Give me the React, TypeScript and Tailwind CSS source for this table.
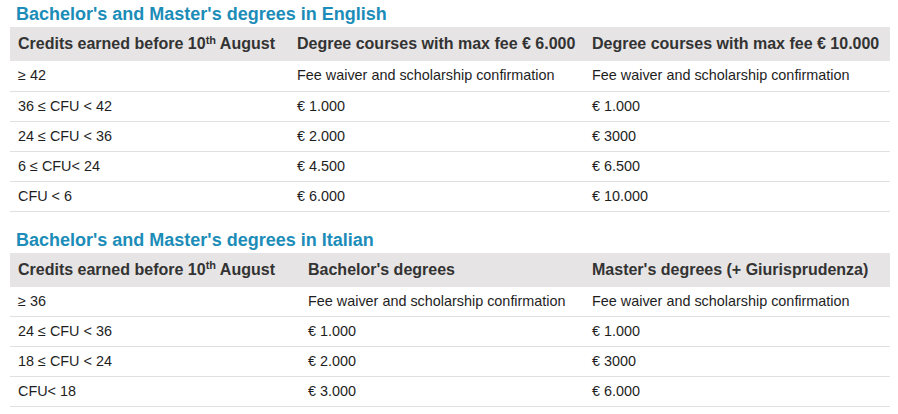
const english = [
  ['≥ 42', 'Fee waiver and scholarship confirmation', 'Fee waiver and scholarship confirmation'],
  ['36 ≤ CFU < 42', '€ 1.000', '€ 1.000'],
  ['24 ≤ CFU < 36', '€ 2.000', '€ 3000'],
  ['6 ≤ CFU< 24', '€ 4.500', '€ 6.500'],
  ['CFU < 6', '€ 6.000', '€ 10.000'],
];

const italian = [
  ['≥ 36', 'Fee waiver and scholarship confirmation', 'Fee waiver and scholarship confirmation'],
  ['24 ≤ CFU < 36', '€ 1.000', '€ 1.000'],
  ['18 ≤ CFU < 24', '€ 2.000', '€ 3000'],
  ['CFU< 18', '€ 3.000', '€ 6.000'],
];

function FeeTable({
  title,
  heads,
  rows,
  widths,
}: {
  title: string;
  heads: string[];
  rows: string[][];
  widths: string[];
}) {
  return (
    <section>
      <h2 className="pl-[6px] text-[18px] font-bold leading-[22px] text-[#1b8db8]">{title}</h2>
      <table className="mt-[2px] w-[880px] table-fixed border-collapse">
        <colgroup>
          {widths.map((w, i) => (
            <col key={i} className={w} />
          ))}
        </colgroup>
        <thead>
          <tr className="h-[34px] bg-[#e6e4e4]">
            <th className="px-2 text-left text-[16px] font-bold text-[#333]">
              Credits earned before 10<sup className="text-[11px]">th</sup> August
            </th>
            {heads.map((h) => (
              <th key={h} className="px-2 text-left text-[16px] font-bold text-[#333]">
                {h}
              </th>
            ))}
          </tr>
        </thead>
        <tbody>
          {rows.map((r, i) => (
            <tr key={i} className="h-[30px] border-b border-[#e0e0e0]">
              {r.map((c, j) => (
                <td key={j} className="px-2 pt-[1px] text-[14.4px] text-[#1e1e1e]">
                  {c}
                </td>
              ))}
            </tr>
          ))}
        </tbody>
      </table>
    </section>
  );
}

export default function App() {
  return (
    <div className="h-[414px] w-[898px] bg-white px-[10px] pt-[3px] font-['Liberation_Sans',Arial,sans-serif]">
      <FeeTable
        title="Bachelor's and Master's degrees in English"
        heads={['Degree courses with max fee € 6.000', 'Degree courses with max fee € 10.000']}
        rows={english}
        widths={['w-[279px]', 'w-[295px]', 'w-[306px]']}
      />
      <div className="mt-[17px]">
        <FeeTable
          title="Bachelor's and Master's degrees in Italian"
          heads={["Bachelor's degrees", "Master's degrees (+ Giurisprudenza)"]}
          rows={italian}
          widths={['w-[290px]', 'w-[284px]', 'w-[306px]']}
        />
      </div>
    </div>
  );
}
